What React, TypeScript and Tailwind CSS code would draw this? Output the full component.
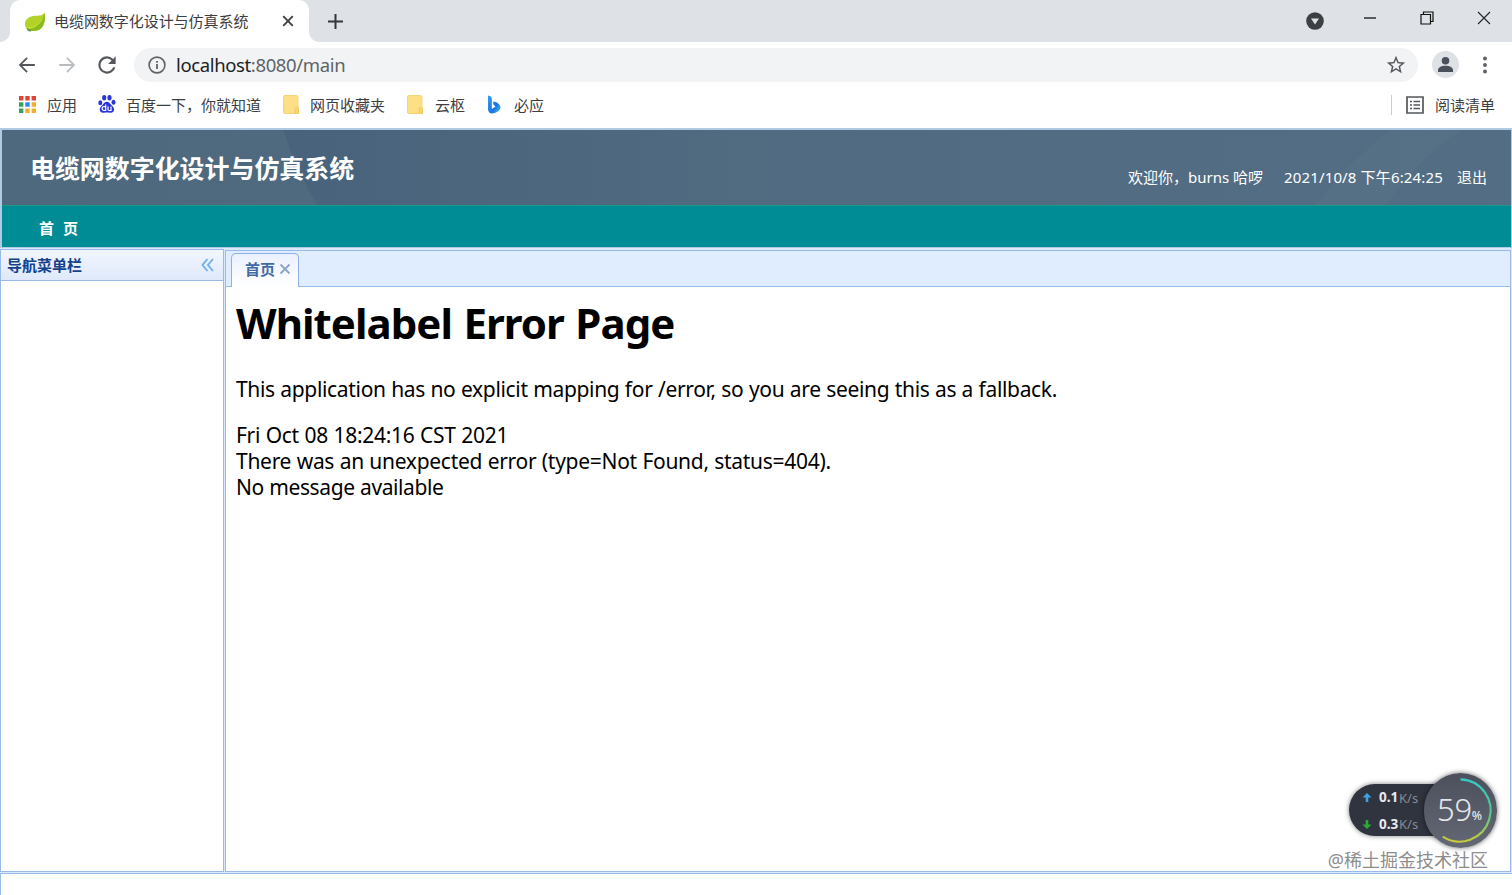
import React from 'react';

const BrowserTabs = () => {
  return (
    <div className="flex h-[42px] bg-[#dee1e6] text-[#3c4043]">
      <div className="relative flex items-center w-[299px] h-[42px] ml-[10px] pl-[14px] rounded-t-[10px] bg-white">
        {/* タブ下側の丸み */}
        <svg className="absolute -left-[10px] bottom-0" width="10" height="10">
          <path d="M10 0v10H0A10 10 0 0 0 10 0Z" fill="#fff" />
        </svg>
        <svg className="absolute -right-[10px] bottom-0" width="10" height="10">
          <path d="M0 0v10h10A10 10 0 0 1 0 0Z" fill="#fff" />
        </svg>
        <svg className="mt-[2px]" width="22" height="22" viewBox="0 0 22 22">
          <path d="M20.300 1.700C18.500 4.700 15 4.700 11.500 4.800C5 5 1 8.500 1 13C1 15.500 2 18 4.300 19.700C7 20.300 11 20.300 14 19.300C20 17 22 9 20.300 1.700Z" fill="#b3d227" />
          <path d="M20.300 1.700C22 9 20 17 14 19.300C11 20.300 7 20.300 4.300 19.700L3 18.300C11 18.500 18 12.500 20.300 1.700Z" fill="#8abb1f" />
          <path d="M2 16.500C9 17.500 15 14 18.800 7.500" fill="none" stroke="#cbe04a" strokeWidth="0.800" />
          <path d="M2.800 17.300C4 17 6 17.800 7 20.200C5.500 21 3.500 20.500 2.800 17.300Z" fill="#5c9c50" />
        </svg>
        <span className="w-[196px] ml-[8px] text-[15px] leading-[20px] tracking-[-0.05px] whitespace-nowrap">电缆网数字化设计与仿真系统</span>
        <svg className="ml-[32px]" width="12" height="12" viewBox="0 0 12 12">
          <path d="M1.200 1.200l9.600 9.600M10.800 1.200l-9.600 9.600" stroke="#3c4043" strokeWidth="1.900" />
        </svg>
      </div>
      <svg className="mt-[14px] ml-[19px]" width="15" height="15" viewBox="0 0 15 15">
        <path d="M7.500 0v15M0 7.500h15" stroke="#33373b" strokeWidth="2" />
      </svg>
      <div className="flex ml-auto">
        <svg className="mt-[12px]" width="18" height="18" viewBox="0 0 18 18">
          <circle cx="9" cy="9" r="8.800" fill="#3c4043" />
          <path d="M5 6.500h8l-4 6Z" fill="#dee1e6" />
        </svg>
        <svg className="mt-[17px] ml-[39px]" width="14" height="2">
          <path d="M1 1h12" stroke="#222" strokeWidth="1.400" />
        </svg>
        <svg className="mt-[11px] ml-[43px]" width="14" height="14" viewBox="0 0 14 14" fill="none" stroke="#111" strokeWidth="1.200">
          <path d="M1 3.500h9.500v9.500H1Z" />
          <path d="M3.500 3.500V1H13v9.500h-2.500" />
        </svg>
        <svg className="mt-[11px] ml-[43px] mr-[21px]" width="14" height="14" viewBox="0 0 14 14">
          <path d="M1 1l12 12M13 1L1 13" stroke="#222" strokeWidth="1.100" />
        </svg>
      </div>
    </div>
  );
};

const Toolbar = () => {
  return (
    <div className="flex items-center h-[45px] pl-[16px] pr-[16px]">
      <svg width="22" height="22" viewBox="0 0 24 24" fill="#54585c">
        <path d="M20.500 11H6.800l6-6L11.400 3.600 3 12l8.400 8.400 1.400-1.400-6-6h13.700z" />
      </svg>
      <svg className="ml-[18px]" width="22" height="22" viewBox="0 0 24 24" fill="#b9bcbf">
        <path d="M3.500 11h13.700l-6-6 1.400-1.400L21 12l-8.400 8.400-1.400-1.400 6-6H3.500z" />
      </svg>
      <svg className="ml-[16px]" width="26" height="26" viewBox="0 0 24 24" fill="#54585c">
        <path d="M17.650 6.350A7.960 7.960 0 0 0 12 4a8 8 0 1 0 7.730 10h-2.080A6 6 0 1 1 12 6c1.660 0 3.140.69 4.220 1.780L13 11h7V4l-2.350 2.350z" />
      </svg>
      <div className="flex items-center w-[1284px] h-[34px] ml-[14px] pl-[14px] pr-[11px] rounded-full bg-[#f1f3f4]">
        <svg width="18" height="18" viewBox="0 0 18 18">
          <circle cx="9" cy="9" r="7.900" fill="none" stroke="#5f6368" strokeWidth="1.600" />
          <path d="M9 8v5M9 5v1.800" stroke="#5f6368" strokeWidth="1.800" />
        </svg>
        <span className="ml-[10px] text-[18.500px] leading-[24px] tracking-[-0.370px] text-[#5f6368]">
          <span className="text-[#202124]">localhost</span>:8080/main
        </span>
        <svg className="ml-auto" width="22" height="22" viewBox="0 0 24 24" fill="#54585c">
          <path d="M22 9.240l-7.190-.62L12 2 9.190 8.630 2 9.240l5.460 4.730L5.820 21 12 17.270 18.180 21l-1.630-7.030L22 9.240zM12 15.400l-3.760 2.270 1-4.280-3.320-2.880 4.380-.38L12 6.100l1.710 4.040 4.380.38-3.320 2.880 1 4.280L12 15.400z" />
        </svg>
      </div>
      <svg className="ml-[14px]" width="27" height="27" viewBox="0 0 27 27">
        <circle cx="13.500" cy="13.500" r="13.500" fill="#dee1e6" />
        <circle cx="13.500" cy="9.800" r="3.800" fill="#4a505a" />
        <path d="M6 21v-2c0-2.700 4-4.200 7.500-4.200S21 16.300 21 19v2Z" fill="#4a505a" />
      </svg>
      <svg className="ml-[24px]" width="4" height="18" viewBox="0 0 4 18" fill="#5f6368">
        <circle cx="2" cy="2.500" r="2" />
        <circle cx="2" cy="9" r="2" />
        <circle cx="2" cy="15.500" r="2" />
      </svg>
    </div>
  );
};

const FolderIcon = () => (
  <svg width="17" height="19" viewBox="0 0 17 19">
    <rect x="0.500" y="0.500" width="14.500" height="18" rx="1.500" fill="#fddf86" stroke="#f5d477" />
    <path d="M12 18v-4.500c0-1.500 3.500-1.500 3.500 0v5H12Z" fill="#fbd56c" stroke="#f0c75b" strokeWidth=".8" />
  </svg>
);

const Bookmarks = () => {
  return (
    <div className="flex items-center h-[41px] pl-[19px] pr-[17px] pb-[6px] text-[15px] leading-[20px] text-[#3c4043] whitespace-nowrap">
      <svg className="mb-[1px]" width="17" height="17" viewBox="0 0 17 17">
        <path d="M0 0h4.400v4.400H0zM6.300 0h4.400v4.400H6.300zM12.600 0H17v4.400h-4.400z" fill="#df4437" />
        <path d="M0 6.300h4.400v4.400H0zM0 12.600h4.400V17H0z" fill="#35a35a" />
        <path d="M6.300 6.300h4.400v4.400H6.300z" fill="#3285f0" />
        <path d="M12.600 6.300H17v4.400h-4.400zM6.300 12.600h4.400V17H6.300zM12.600 12.600H17V17h-4.400z" fill="#f0b02b" />
      </svg>
      <span className="w-[30px] mt-[1px] ml-[11px]">应用</span>
      <svg className="mb-[1px] ml-[21px]" width="18" height="18" viewBox="0 0 18 18" fill="#2b35d8">
        <ellipse cx="2.300" cy="7.800" rx="2" ry="2.500" />
        <ellipse cx="6.200" cy="2.800" rx="2.100" ry="2.700" />
        <ellipse cx="11.500" cy="2.800" rx="2.100" ry="2.700" />
        <ellipse cx="15.500" cy="7.300" rx="2" ry="2.500" />
        <path d="M8.800 6.800c2.200 0 3 1.700 4.500 3.200 2 1.900 3.100 3.200 2.700 5.200-.5 2.700-3 2.700-7.200 2.400-3.800.3-6.500.3-7-2.400-.4-2 .8-3.300 2.700-5.200 1.400-1.500 2.200-3.200 4.300-3.200Z" />
        <path d="M7.700 9.500v6H6a1.800 1.800 0 0 1 0-3.800h1.700M10 11.500v2.800c0 .9.500 1.200 1.300 1.200h1.700v-4" fill="none" stroke="#fff" strokeWidth="1.200" />
      </svg>
      <span className="w-[135px] mt-[1px] ml-[10px]">百度一下，你就知道</span>
      <div className="ml-[22px]"><FolderIcon /></div>
      <span className="w-[75px] mt-[1px] ml-[10px]">网页收藏夹</span>
      <div className="ml-[22px]"><FolderIcon /></div>
      <span className="w-[30px] mt-[1px] ml-[11px]">云枢</span>
      <svg className="ml-[22px]" width="14" height="19" viewBox="0 0 14 19">
        <defs>
          <linearGradient id="bing" x1="0" y1="0" x2="1" y2="1">
            <stop offset="0" stopColor="#399ff5" />
            <stop offset=".6" stopColor="#1b72e5" />
            <stop offset="1" stopColor="#38cbef" />
          </linearGradient>
        </defs>
        <path d="M1 0.500C3.500 0.800 4.800 2 4.800 4V14L8.500 11.500L6.800 10C6 9 5.800 7 6.500 6.500C9 6.800 13.500 9 13.500 12.500C13.500 15 9 18.500 5 18.500C2.500 18.500 1 16.500 1 14Z" fill="url(#bing)" />
      </svg>
      <span className="w-[30px] mt-[1px] ml-[13px]">必应</span>
      <div className="w-px h-[20px] ml-auto bg-[#c9ccd0]" />
      <svg className="ml-[14px]" width="18" height="18" viewBox="0 0 18 18">
        <path d="M1 1h16v16H1Z" fill="none" stroke="#54585c" strokeWidth="1.700" />
        <path d="M4 5.500h2M4 9h2M4 12.500h2M7.500 5.500H14M7.500 9H14M7.500 12.500H14" stroke="#54585c" strokeWidth="1.500" />
      </svg>
      <span className="w-[60px] mt-[1px] ml-[11px]">阅读清单</span>
    </div>
  );
};

const Header = () => {
  return (
    <div className="h-[120px] border-l-2 border-r border-t-2 border-b-2 border-[#afcbe4]">
      <div className="relative flex justify-between h-[75px] bg-linear-to-r from-[#4e687e] to-[#536e84] text-white whitespace-nowrap">
        <svg className="absolute inset-0 w-full h-full" viewBox="0 0 1508 75" preserveAspectRatio="none">
          <defs>
            <linearGradient id="shade">
              <stop offset="0" stopColor="#46617a" />
              <stop offset="1" stopColor="#46617a" stopOpacity="0" />
            </linearGradient>
          </defs>
          <path d="M281 0c9 28 20 52 34 75h420V0Z" fill="url(#shade)" fillOpacity=".8" />
          <path d="M1388 0c-30 23-54 47-75 75h70c20-29 43-53 75-75Z" fill="#fff" fillOpacity=".02" />
        </svg>
        <div className="relative mt-[20px] ml-[28px] text-[24.950px] leading-[36px] font-bold">电缆网数字化设计与仿真系统</div>
        <div className="relative flex mt-[35px] mr-[24px] text-[15px] leading-[24px]">
          <span className="w-[135px]">欢迎你，burns 哈啰</span>
          <span className="w-[160px] ml-[21px] tracking-[0.150px]">2021/10/8 下午6:24:25</span>
          <span className="w-[30px] ml-[13px]">退出</span>
        </div>
      </div>
      <div className="flex items-center h-[42px] pl-[37px] pt-[3px] border-t border-[#1b9a89] bg-[#008c95] text-[15px] font-bold text-white">
        <span className="mr-[9px]">首</span>
        <span>页</span>
      </div>
    </div>
  );
};

const Sidebar = () => {
  return (
    <div className="flex flex-col w-[224px] border border-[#99bbe8] bg-white">
      <div className="flex items-center justify-between h-[31px] pl-[6px] pr-[9px] border-b border-[#99bbe8] bg-linear-to-b from-[#f2f6ff] to-[#dfe9fb]">
        <span className="text-[15px] leading-[20px] font-bold text-[#15428b]">导航菜单栏</span>
        <svg width="13" height="14" viewBox="0 0 13 14">
          <path d="M6.500 1L1.500 7l5 6M12 1L7 7l5 6" fill="none" stroke="#72b0f0" strokeWidth="1.900" />
        </svg>
      </div>
    </div>
  );
};

const Content = () => {
  return (
    <div className="flex flex-col flex-1 mt-px ml-px mr-px border border-[#99bbe8] bg-white">
      <div className="flex items-end h-[36px] pl-[5px] border-b border-[#99bbe8] bg-[#e0ecff]">
        <div className="flex items-center h-[34px] w-[68px] -mb-px pb-[3px] pl-[13px] rounded-t-[5px] border border-b-0 border-[#8db2e3] bg-linear-to-b from-[#eaf1ff] to-white">
          <span className="text-[15px] leading-[20px] font-bold text-[#416aa3]">首页</span>
          <svg className="ml-[4px]" width="12" height="12" viewBox="0 0 12 12">
            <path d="M1.500 1.500l9 9M10.500 1.500l-9 9" stroke="#8ba4ca" strokeWidth="1.800" />
          </svg>
        </div>
      </div>
      <div className="pt-[8px] pl-[10px] text-[21px] leading-[26px] tracking-[-0.330px] [word-spacing:0.350px] text-black whitespace-nowrap">
        <h1 className="text-[42px] leading-[56px] font-bold tracking-[-0.960px] [word-spacing:1.500px]">Whitelabel Error Page</h1>
        <p className="mt-[25px]">This application has no explicit mapping for /error, so you are seeing this as a fallback.</p>
        <div className="mt-[20px] tracking-[-0.280px]">Fri Oct 08 18:24:16 CST 2021</div>
        <div className="tracking-[-0.290px]">There was an unexpected error (type=Not Found, status=404).</div>
        <div className="tracking-[-0.400px]">No message available</div>
      </div>
    </div>
  );
};

// 右下に浮かぶ通信速度ウィジェット
const SpeedWidget = () => {
  return (
    <div className="absolute right-[15px] bottom-[47px] w-[148px] h-[75px]">
      <div className="absolute left-0 top-[11px] w-[110px] h-[52px] pl-[13px] rounded-full bg-[#30343f] shadow-[0_0_5px_rgba(0,0,0,0.5)] text-[13.500px] text-[#e8eaf0]">
        <div className="flex items-center h-[27px]">
          <svg width="10" height="9" viewBox="0 0 10 9">
            <path d="M5 0l4.500 4.500H6.300V9H3.700V4.500H.5Z" fill="#3ea2e5" />
          </svg>
          <span className="w-[20px] ml-[7px] font-bold">0.1</span>
          <span className="mt-[2px] text-[13px] text-[#868a94]">K/s</span>
        </div>
        <div className="flex items-center h-[26px]">
          <svg width="10" height="9" viewBox="0 0 10 9">
            <path d="M5 9L.5 4.500h3.200V0h2.600v4.500h3.200Z" fill="#2daa35" />
          </svg>
          <span className="w-[20px] ml-[7px] font-bold">0.3</span>
          <span className="mt-[2px] text-[13px] text-[#868a94]">K/s</span>
        </div>
      </div>
      <div className="absolute right-0 top-0 flex items-center w-[73px] h-[75px] pl-[13px] rounded-full bg-linear-to-b from-[#4c505c] to-[#646875] shadow-[0_0_5px_rgba(0,0,0,0.6)] text-[#e5e6ea]">
        <svg className="absolute inset-0" width="73" height="75" viewBox="0 0 74 76" fill="none" strokeWidth="2.200">
          <defs>
            <linearGradient id="ring" x1="0" y1="0" x2="0" y2="1">
              <stop offset="0" stopColor="#37c9c4" />
              <stop offset=".55" stopColor="#4fc78d" />
              <stop offset="1" stopColor="#c8c83d" />
            </linearGradient>
          </defs>
          <path d="M37 6.500A31.500 31.500 0 1 1 19 64.500" stroke="url(#ring)" />
        </svg>
        <span className="-mt-[2px] text-[31px] font-light tracking-[-0.300px]">59</span>
        <span className="mt-[11px] text-[12px] font-medium">%</span>
      </div>
    </div>
  );
};

const App = () => {
  return (
    <div className="relative w-[1512px] h-[895px] overflow-hidden bg-white font-['Noto_Sans','Noto_Sans_CJK_SC',sans-serif]">
      <BrowserTabs />
      <Toolbar />
      <Bookmarks />
      <Header />
      <div className="flex h-[625px] pt-px pb-px bg-[#dce9f8]">
        <Sidebar />
        <Content />
      </div>
      <div className="h-[22px] border-l border-t border-[#99bbe8] bg-white" />
      <SpeedWidget />
      <div className="absolute right-[24px] bottom-[23px] text-[18px] leading-[24px] text-[#8d8d8d] whitespace-nowrap">@稀土掘金技术社区</div>
    </div>
  );
};

export default App;
